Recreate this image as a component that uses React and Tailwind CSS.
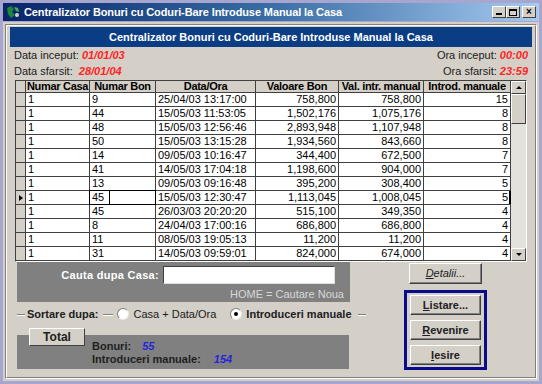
import React from 'react'

const ROWS = [
  ['1', '9', '25/04/03 13:17:00', '758,800', '758,800', '15'],
  ['1', '44', '15/05/03 11:53:05', '1,502,176', '1,075,176', '8'],
  ['1', '48', '15/05/03 12:56:46', '2,893,948', '1,107,948', '8'],
  ['1', '50', '15/05/03 13:15:28', '1,934,560', '843,660', '8'],
  ['1', '14', '09/05/03 10:16:47', '344,400', '672,500', '7'],
  ['1', '41', '14/05/03 17:04:18', '1,198,600', '904,000', '7'],
  ['1', '13', '09/05/03 09:16:48', '395,200', '308,400', '5'],
  ['1', '45', '15/05/03 12:30:47', '1,113,045', '1,008,045', '5'],
  ['1', '45', '26/03/03 20:20:20', '515,100', '349,350', '4'],
  ['1', '8', '24/04/03 17:00:16', '686,800', '686,800', '4'],
  ['1', '11', '08/05/03 19:05:13', '11,200', '11,200', '4'],
  ['1', '31', '14/05/03 09:59:01', '824,000', '674,000', '4'],
]

const HEADERS = ['Numar Casa', 'Numar Bon', 'Data/Ora', 'Valoare Bon', 'Val. intr. manual', 'Introd. manuale']
const WIDTHS = ['w-[64px]', 'w-[66px]', 'w-[100px]', 'w-[83px]', 'w-[85px]', 'w-[87px]']
const SELECTED = 7

function WinButton({ children, className = '' }) {
  return (
    <div className={`flex items-center justify-center bg-[#d4d0c8] border border-t-white border-l-white border-r-[#404040] border-b-[#404040] shadow-[inset_-1px_-1px_0_#808080] text-[11px] font-bold text-[#202020] ${className}`}>
      {children}
    </div>
  )
}

function Radio({ checked }) {
  return (
    <span className="shrink-0 w-[12px] h-[12px] rounded-full bg-white border border-t-[#808080] border-l-[#808080] border-r-[#e8e8e8] border-b-[#e8e8e8] flex items-center justify-center">
      {checked && <span className="w-[4px] h-[4px] rounded-full bg-black" />}
    </span>
  )
}

export default function App() {
  return (
    <div className="w-[542px] h-[384px] bg-[#a7a6cf] p-[3px] flex flex-col font-['Liberation_Sans',Arial,sans-serif] overflow-hidden">
      {/* title bar */}
      <div className="h-[18px] flex items-center bg-gradient-to-r from-[#0a246a] via-[#3a6ea5] to-[#a6caf0] px-[2px]">
        <svg width="16" height="14" viewBox="0 0 16 14" className="mr-[3px]">
          <path d="M2 3 L6 1 L9 4 L7 7 L10 10 L6 13 L3 9 Z" fill="#1a8a3a" />
          <path d="M9 2 L13 3 L14 7 L11 6 Z" fill="#4ab04a" />
          <circle cx="12" cy="10" r="2" fill="#d4d0c8" />
        </svg>
        <span className="text-white text-[11px] font-bold tracking-[-0.1px]">Centralizator Bonuri cu Coduri-Bare Introduse Manual la Casa</span>
        <div className="ml-auto flex mr-[1px]">
          <div className="w-[14px] h-[12px] bg-[#d4d0c8] border border-t-white border-l-white border-r-[#404040] border-b-[#404040] flex items-end justify-center pb-[2px]"><span className="w-[6px] h-[2px] bg-black" /></div>
          <div className="w-[14px] h-[12px] bg-[#d4d0c8] border border-t-white border-l-white border-r-[#404040] border-b-[#404040] flex items-center justify-center"><span className="w-[8px] h-[7px] border border-black border-t-2" /></div>
          <div className="w-[14px] h-[12px] bg-[#d4d0c8] border border-t-white border-l-white border-r-[#404040] border-b-[#404040] flex items-center justify-center ml-[2px] text-[10px] leading-none font-bold text-black">×</div>
        </div>
      </div>

      {/* body */}
      <div className="flex-1 bg-[#d4d0c8] mt-[1px] p-[2px]">
        <div className="h-full border border-t-[#808080] border-l-[#808080] border-r-white border-b-white">
          <div className="h-full border border-t-white border-l-white border-r-[#808080] border-b-[#808080] px-[3px] pt-[1px]">
            <div className="h-[20px] bg-[#0b3d85] flex items-center justify-center text-white text-[11px] font-bold">
              Centralizator Bonuri cu Coduri-Bare Introduse Manual la Casa
            </div>

            <div className="flex justify-between text-[11px] text-[#202020] px-[4px] leading-[16px]">
              <div>
                <div>Data inceput: <span className="text-[#ff2424] font-bold italic">01/01/03</span></div>
                <div>Data sfarsit: &nbsp;<span className="text-[#ff2424] font-bold italic">28/01/04</span></div>
              </div>
              <div className="text-right">
                <div>Ora inceput: <span className="text-[#ff2424] font-bold italic">00:00</span></div>
                <div>Ora sfarsit: <span className="text-[#ff2424] font-bold italic">23:59</span></div>
              </div>
            </div>

            {/* grid */}
            <div className="ml-[5px] mt-[1px] w-[512px] h-[182px] border border-t-[#404040] border-l-[#404040] border-r-white border-b-white flex bg-white overflow-hidden">
              <div className="flex flex-col text-[11px] text-black">
                <div className="flex h-[12px] leading-[11px] font-bold tracking-[-0.3px]">
                  <div className="w-[10px] bg-[#d4d0c8] border-r border-b border-[#404040]" />
                  {HEADERS.map((h, i) => (
                    <div key={h} className={`${WIDTHS[i]} bg-[#d4d0c8] border-r border-b border-[#404040] text-center whitespace-nowrap overflow-hidden`}>{h}</div>
                  ))}
                </div>
                {ROWS.map((r, ri) => (
                  <div key={ri} className="flex h-[14px] leading-[13px]">
                    <div className="w-[10px] bg-[#d4d0c8] border-r border-b border-[#404040] flex items-center justify-center">
                      {ri === SELECTED && <span className="w-0 h-0 border-y-[3px] border-y-transparent border-l-[4px] border-l-black" />}
                    </div>
                    {r.map((c, ci) => (
                      <div key={ci} className={`${WIDTHS[ci]} relative border-r border-b border-[#404040] px-[2px] whitespace-nowrap ${ci >= 3 ? 'text-right' : ''}`}>
                        {c}
                        {ri === SELECTED && ci === 1 && (
                          <span className="absolute inset-[-1px] border border-black">
                            <span className="absolute left-[19px] top-0 bottom-0 border-l border-black" />
                          </span>
                        )}
                        {ri === SELECTED && ci === 5 && <span className="absolute right-[-1px] top-0 bottom-0 w-[2px] bg-black" />}
                      </div>
                    ))}
                  </div>
                ))}
              </div>
              {/* scrollbar */}
              <div className="w-[15px] bg-[#e4e2dc] flex flex-col">
                <div className="h-[13px] bg-[#d4d0c8] border border-t-white border-l-white border-r-[#404040] border-b-[#404040] flex items-center justify-center">
                  <span className="w-0 h-0 border-x-[3px] border-x-transparent border-b-[3px] border-b-black" />
                </div>
                <div className="h-[30px] bg-[#d4d0c8] border border-t-white border-l-white border-r-[#404040] border-b-[#404040]" />
                <div className="flex-1" />
                <div className="h-[13px] bg-[#d4d0c8] border border-t-white border-l-white border-r-[#404040] border-b-[#404040] flex items-center justify-center">
                  <span className="w-0 h-0 border-x-[3px] border-x-transparent border-t-[3px] border-t-black" />
                </div>
              </div>
            </div>

            {/* bottom section */}
            <div className="flex">
              <div className="w-[333px] ml-[7px]">
                <div className="h-[40px] bg-[#808080]">
                  <div className="flex items-center pt-[4px]">
                    <span className="w-[146px] text-right pr-[4px] text-white text-[11px] font-bold tracking-[0.3px]">Cauta dupa Casa:</span>
                    <div className="w-[172px] h-[18px] bg-white border border-t-[#404040] border-l-[#404040] border-r-[#e0e0e0] border-b-[#e0e0e0]" />
                  </div>
                  <div className="text-right pr-[6px] text-[11px] text-[#d8d8d8] mt-[2px]">HOME = Cautare Noua</div>
                </div>

                <div className="flex items-center h-[24px] text-[11px] text-[#202020] whitespace-nowrap">
                  <span className="w-[8px] shrink-0 border-t border-[#808080] shadow-[0_1px_0_white]" />
                  <span className="font-bold px-[2px]">Sortare dupa:</span>
                  <span className="w-[10px] shrink-0 border-t border-[#808080] shadow-[0_1px_0_white] mx-[2px]" />
                  <span className="flex items-center gap-[5px] ml-[2px]"><Radio /> Casa + Data/Ora</span>
                  <span className="flex items-center gap-[4px] ml-[14px] font-bold"><Radio checked /> Introduceri manuale</span>
                  <span className="w-[8px] shrink-0 border-t border-[#808080] shadow-[0_1px_0_white] ml-[6px]" />
                </div>

                <div className="mt-[9px] h-[34px] w-[332px] bg-[#808080] relative text-[11px] font-bold text-[#202020]">
                  <div className="absolute left-[12px] top-[-7px] w-[56px] h-[18px] bg-[#d4d0c8] border border-t-white border-l-white border-r-[#404040] border-b-[#404040] flex items-center justify-center text-[12px] text-[#202020]">Total</div>
                  <div className="pl-[75px] pt-[5px] leading-[13px]">
                    <div>Bonuri: <span className="ml-[8px] text-[#2626d8] italic">55</span></div>
                    <div>Introduceri manuale: <span className="ml-[10px] text-[#2626d8] italic">154</span></div>
                  </div>
                </div>
              </div>

              <div className="ml-[54px] flex flex-col">
                <WinButton className="w-[73px] h-[21px] mt-[1px] ml-[5px] italic font-normal"><span><span className="underline">D</span>etalii...</span></WinButton>
                <div className="mt-[6px] w-[83px] h-[80px] border-[3px] border-[#0a0a8c] bg-[#d4d0c8] flex flex-col items-center justify-center gap-[5px]">
                  <WinButton className="w-[71px] h-[20px]"><span><span className="underline">L</span>istare...</span></WinButton>
                  <WinButton className="w-[71px] h-[20px]"><span><span className="underline">R</span>evenire</span></WinButton>
                  <WinButton className="w-[71px] h-[20px]"><span><span className="underline">I</span>esire</span></WinButton>
                </div>
              </div>
            </div>
          </div>
        </div>
      </div>
    </div>
  )
}
